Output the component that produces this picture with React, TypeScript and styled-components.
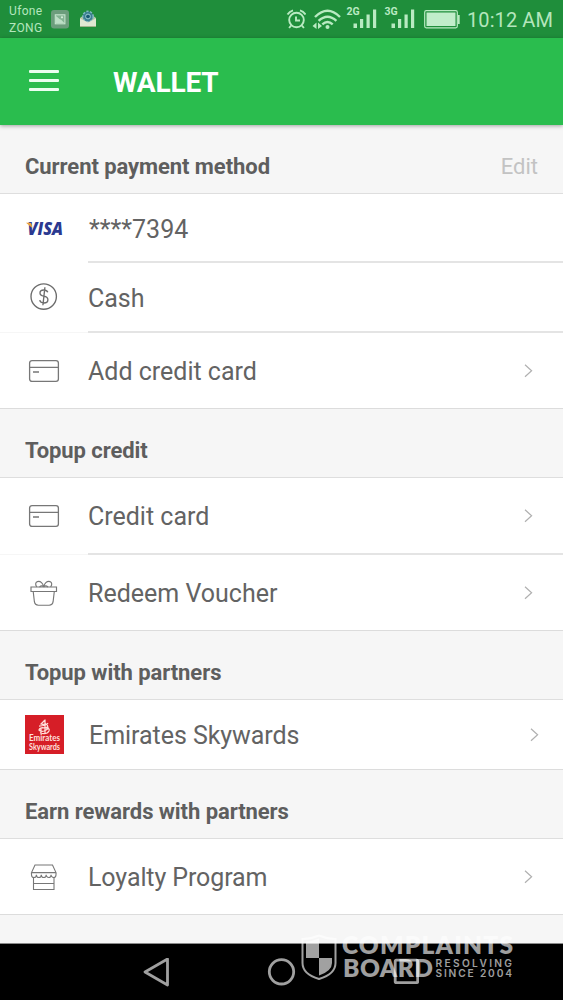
import React from 'react';
import styled, { createGlobalStyle } from 'styled-components';

const GlobalStyle = createGlobalStyle`
  * { box-sizing: border-box; }
  body { margin: 0; background: #fff; font-family: Roboto, "Liberation Sans", sans-serif; }
  svg { display: block; flex: none; }
`;

const Screen = styled.div`
  position: relative;
  width: 563px;
  height: 1000px;
  display: flex;
  flex-direction: column;
  overflow: hidden;
  background: #f6f6f6;
`;

const StatusBar = styled.div`
  flex: none;
  height: 38px;
  display: flex;
  align-items: center;
  padding: 0 9px 0 9px;
  background: #1f8e3b;
  color: #b4e6bd;
`;

const Carriers = styled.div`
  width: 42px;
  font-size: 12px;
  line-height: 17px;
  letter-spacing: 0.35px;
  padding-top: 1px;
`;

const StatusIcons = styled.div`
  margin-left: auto;
  display: flex;
  align-items: center;
`;

const AlarmSlot = styled.div`
  margin-right: 6px;
`;

const WifiSlot = styled.div`
  margin-right: 5px;
`;

const Signals = styled.div`
  display: flex;
  gap: 6px;
  margin: -2px 8px 0 0;
`;

const Clock = styled.div`
  width: 87px;
  margin-left: 7px;
  padding-top: 2px;
  font-size: 20px;
  line-height: 24px;
  letter-spacing: 0.1px;
  white-space: nowrap;
`;

const AppBar = styled.header`
  flex: none;
  position: relative;
  height: 87px;
  display: flex;
  align-items: center;
  padding: 0 29px;
  background: #2abd4e;
  box-shadow: 0 1px 4px rgba(0, 0, 0, 0.35);
`;

const MenuButton = styled.div`
  width: 30px;
  height: 21px;
  display: flex;
  flex-direction: column;
  justify-content: space-between;
  margin: -2px 54px 0 0;
`;

const MenuLine = styled.span`
  height: 3px;
  border-radius: 1px;
  background: #eafff0;
`;

const Title = styled.h1`
  margin: 2px 0 0;
  color: #fff;
  font-size: 28px;
  line-height: 34px;
  font-weight: 700;
  letter-spacing: -0.15px;
`;

const SectionHeader = styled.div<{ $height: number }>`
  flex: none;
  height: ${(p) => p.$height}px;
  display: flex;
  align-items: flex-end;
  justify-content: space-between;
  padding: 0 25px 12px;
  border-bottom: 1px solid #dedede;
  background: #f6f6f6;
  color: #5e5e5e;
  font-size: 22px;
  line-height: 28px;
  font-weight: 700;
`;

const SectionTitle = styled.span`
  letter-spacing: -0.07px;
`;

const EditButton = styled.span`
  color: #c3c3c3;
  font-weight: 400;
`;

const Row = styled.div<{ $height: number; $last?: boolean }>`
  flex: none;
  height: ${(p) => p.$height}px;
  display: flex;
  background: #fff;
  border-bottom: ${(p) => (p.$last ? '1px solid #dcdcdc' : 'none')};
`;

const IconCell = styled.div<{ $rule?: boolean }>`
  width: 88px;
  display: flex;
  align-items: center;
  padding-left: 25px;
  border-bottom: ${(p) => (p.$rule ? '1px solid #f6f6f6' : 'none')};
`;

const RowBody = styled.div<{ $divider?: boolean; $wide?: boolean }>`
  flex: 1;
  display: flex;
  align-items: center;
  justify-content: space-between;
  padding: 0 ${(p) => (p.$wide ? 24 : 30)}px 0 ${(p) => (p.$wide ? 1 : 0)}px;
  border-bottom: ${(p) => (p.$divider ? '2px solid #e4e4e4' : 'none')};
`;

const Label = styled.span<{ $drop?: number; $spacing?: number }>`
  color: #636363;
  font-size: 25px;
  line-height: 30px;
  white-space: nowrap;
  letter-spacing: ${(p) => p.$spacing ?? 0}px;
  padding-top: ${(p) => (p.$drop ?? 1) * 2}px;
`;

const NavBar = styled.nav`
  flex: none;
  height: 57px;
  margin-top: auto;
  display: flex;
  align-items: flex-start;
  padding: 14px 0 0 142px;
  gap: 97px;
  background: #000;
  border-top: 1px solid #8a8a8a;
`;

const Watermark = styled.svg`
  position: absolute;
  left: 298px;
  top: 932px;
`;

const Chevron = () => (
  <svg width="9" height="14" viewBox="0 0 9 14" fill="none" stroke="#b0b0b0" strokeWidth="1.200">
    <path d="M1 .8l6.600 6L1 12.800" />
  </svg>
);

const PictureIcon = () => (
  <svg width="18" height="19" viewBox="0 0 18 19">
    <rect width="18" height="18.500" rx="3" fill="#6c9d7c" />
    <rect x="4.300" y="4.800" width="9.600" height="9" fill="#83b392" stroke="#c5e5cd" strokeWidth="1.100" />
    <path d="M5 6l3.500 3 2 1 2.800 3H5z" fill="#bddfc6" />
    <circle cx="11" cy="7.300" r="1.100" fill="#d7f0dc" />
  </svg>
);

const MailSlot = styled.div`
  margin-left: 10px;
`;

const MailIcon = () => (
  <svg width="18" height="18" viewBox="0 0 18 18">
    <path d="M1 8l8-6 8 6v8.500H1z" fill="#b9c9a4" />
    <circle cx="9" cy="6.500" r="5.200" fill="#3b7f91" stroke="#82bac0" strokeWidth="1.500" strokeDasharray="2.200 1.500" />
    <circle cx="9" cy="6.500" r="2.400" fill="#185a72" stroke="#9dced2" />
    <path d="M1 8.500l8 4 8-4v8H1z" fill="#dfe8d2" />
    <path d="M1 16.500h16" stroke="#a1b58d" />
  </svg>
);

const AlarmIcon = () => (
  <svg width="20" height="21" viewBox="0 0 20 21" fill="none" stroke="#b9eac2" strokeWidth="1.900">
    <circle cx="10.500" cy="11" r="7.300" />
    <path d="M10 7.500V11.500h4M1.500 5.600Q3.500 2.300 7 1.300M19.500 5.600Q17.500 2.300 14 1.300M5.100 16.500l-2 2.500M15.900 16.500l2 2.500" />
  </svg>
);

const WifiIcon = () => (
  <svg width="29" height="21" viewBox="0 0 29 21" fill="none" stroke="#b9eac2" strokeWidth="2.400">
    <path d="M3 8Q15.500-4.500 28 8M6.600 11.800Q15.500 3.500 24.400 11.800M10.300 15.300Q15.500 10.500 20.700 15.300" />
    <circle cx="15.500" cy="18" r="2" fill="#b9eac2" stroke="none" />
    <path d="M4.500 13.500v6.500L.5 17zM6 13.500v6.500l4-3z" fill="#b9eac2" stroke="none" />
  </svg>
);

const SignalIcon = ({ label }: { label: string }) => (
  <svg width="32" height="25" viewBox="0 0 32 25" fill="#b9eac2">
    <text x="0.500" y="8.500" fontSize="10.500" fontWeight="700" fontFamily="Roboto, sans-serif">{label}</text>
    <rect x="7.500" y="17.500" width="3.500" height="4.500" />
    <rect x="14" y="13" width="3.200" height="9" />
    <rect x="20.500" y="8.500" width="3.200" height="13.500" />
    <rect x="27" y="3.500" width="3.200" height="18.500" />
  </svg>
);

const BatteryIcon = () => (
  <svg width="36" height="19" viewBox="0 0 36 19">
    <rect x="0.700" y="0.700" width="32.600" height="17.100" rx="1.500" fill="none" stroke="#b9eac2" strokeWidth="1.200" />
    <rect x="2.500" y="2.500" width="29" height="13.500" fill="#c1edca" />
    <path d="M34 5h1.700v9H34z" fill="#b9eac2" />
  </svg>
);

const VisaLogo = () => (
  <svg width="40" height="24" viewBox="0 0 40 24" fontFamily="Open Sans, sans-serif" fontWeight="800" fontStyle="italic">
    <text x="2.500" y="18" fontSize="17" fill="#2b3990" textLength="35.500" lengthAdjust="spacingAndGlyphs">VISA</text>
    <path d="M1 5.700h4q1.300 0 1.600 1.500l.7 3.800Q4.500 8.500 1 5.700z" fill="#e9a13a" />
  </svg>
);

const CashIcon = () => (
  <svg width="38" height="29" viewBox="0 0 38 29" fill="none" stroke="#6c6c6c" strokeWidth="1.350">
    <circle cx="18.700" cy="13.500" r="12.700" />
    <path d="M22.800 9.300Q21.800 7 18.800 7Q15 7 15 10Q15 12.500 18.800 13.200Q22.900 14 22.900 16.800Q22.900 20 18.900 20Q15.400 20 14.700 17.200M19.900 4.300L17.900 22.300" />
  </svg>
);

const CardIcon = () => (
  <svg width="38" height="24" viewBox="0 0 38 24" fill="none" stroke="#777" strokeWidth="1.300">
    <rect x="4.600" y="1.600" width="28.800" height="20.800" rx="2.400" />
    <path d="M4.600 8.300h28.800M8 13h6" />
  </svg>
);

const GiftIcon = () => (
  <svg width="38" height="28" viewBox="0 0 38 28" fill="none" stroke="#777" strokeWidth="1.150">
    <path d="M6 8h25.500v4.500H6zM8.200 12.500l1.200 10.200q.5 3.500 4 3.500h10.700q3.500 0 4-3.500l1.200-10.200" />
    <path d="M18.700 8C18.200 4.500 15.500 1.800 12.500 2.600Q9.200 4.200 11.800 8M18.700 8C19.200 4.500 21.900 1.800 24.900 2.600Q28.200 4.200 25.600 8M18.700 8Q17 5.800 14.500 8M18.700 8Q20.500 5.800 23 8" />
  </svg>
);

const StoreIcon = () => (
  <svg width="38" height="28" viewBox="0 0 38 28" fill="none" stroke="#777" strokeWidth="1.100">
    <path d="M10 2h17.500l3.500 7.600H6.500zM6.500 9.600v2.100a2.450 2.800 0 0 0 4.900 0a2.450 2.800 0 0 0 4.900 0a2.450 2.800 0 0 0 4.900 0a2.450 2.800 0 0 0 4.900 0a2.450 2.800 0 0 0 4.900 0V9.600" />
    <path d="M8.500 14.500v12h20.500v-12M8.500 20.500H29" />
  </svg>
);

const EmiratesLogo = () => (
  <svg width="39" height="39" viewBox="0 0 39 39">
    <rect width="39" height="39" fill="#d61e27" />
    <path d="M20 4.500v14.500M20 5l-4 4q3 1 5 0q4 3-1 4q-5-1-6 2q2 2 5 1q5-2 4-4M14 11q7 0 9-3M15 18q7 2 9-2q1-3-3-3M16 14v4" fill="none" stroke="#ffdeda" strokeWidth="1.250" />
    <g fill="#ffe1de" fontFamily="Lato, sans-serif" fontWeight="700" fontSize="8.500">
      <text x="4" y="26" textLength="31" lengthAdjust="spacingAndGlyphs">Emirates</text>
      <text x="4" y="34.500" textLength="31" lengthAdjust="spacingAndGlyphs">Skywards</text>
    </g>
  </svg>
);

const BackIcon = () => (
  <svg width="28" height="30" viewBox="0 0 28 30" fill="none" stroke="#a0a0a0" strokeWidth="2.800" strokeLinejoin="round">
    <path d="M25.500 1v26L3 14z" />
  </svg>
);

const HomeIcon = () => (
  <svg width="29" height="29" viewBox="0 0 29 29" fill="none" stroke="#a0a0a0" strokeWidth="2.800">
    <circle cx="14.500" cy="13.800" r="12.200" />
  </svg>
);

const RecentsIcon = () => (
  <svg width="26" height="28" viewBox="0 0 26 28" fill="none" stroke="#a0a0a0" strokeWidth="2.800">
    <rect x="2.200" y="2.200" width="22.500" height="22.500" rx="1" />
  </svg>
);

const BoardWatermark = () => (
  <Watermark width="220" height="52" viewBox="0 0 220 52" fill="#fff" fillOpacity=".63" fontFamily="Lato, sans-serif">
    <path d="M21 3.500Q29 7 37.500 7V31Q37.500 42 21 47Q4.500 42 4.500 31V7Q13 7 21 3.500z" fill="none" stroke="#fff" strokeOpacity=".63" strokeWidth="2" />
    <path d="M8 9.500Q15 9 21 6.500V26H8zM21 26h13v5q0 8-13 12.500z" />
    <text x="44" y="22.300" fontSize="24.500" fontWeight="800" textLength="171">COMPLAINTS</text>
    <text x="45" y="44.800" fontSize="24.500" fontWeight="800" textLength="90">BOARD</text>
    <g fontFamily="Inter, sans-serif" fontWeight="600" fontSize="10.200">
      <text x="137.500" y="35" textLength="76.500">RESOLVING</text>
      <text x="137.500" y="45.300" textLength="76.500">SINCE 2004</text>
    </g>
  </Watermark>
);

export default function App() {
  return (
    <>
      <GlobalStyle />
      <Screen>
        <StatusBar>
          <Carriers>
            <div>Ufone</div>
            <div>ZONG</div>
          </Carriers>
          <PictureIcon />
          <MailSlot><MailIcon /></MailSlot>
          <StatusIcons>
            <AlarmSlot><AlarmIcon /></AlarmSlot>
            <WifiSlot><WifiIcon /></WifiSlot>
            <Signals>
              <SignalIcon label="2G" />
              <SignalIcon label="3G" />
            </Signals>
            <BatteryIcon />
            <Clock>10:12 AM</Clock>
          </StatusIcons>
        </StatusBar>
        <AppBar>
          <MenuButton>
            <MenuLine />
            <MenuLine />
            <MenuLine />
          </MenuButton>
          <Title>WALLET</Title>
        </AppBar>

        <SectionHeader $height={69}>
          <SectionTitle>Current payment method</SectionTitle>
          <EditButton>Edit</EditButton>
        </SectionHeader>
        <Row $height={69}>
          <IconCell><VisaLogo /></IconCell>
          <RowBody $divider $wide><Label $drop={2}>****7394</Label></RowBody>
        </Row>
        <Row $height={70}>
          <IconCell $rule><CashIcon /></IconCell>
          <RowBody $divider><Label $drop={1.5}>Cash</Label></RowBody>
        </Row>
        <Row $height={76} $last>
          <IconCell><CardIcon /></IconCell>
          <RowBody><Label>Add credit card</Label><Chevron /></RowBody>
        </Row>

        <SectionHeader $height={69}>
          <SectionTitle>Topup credit</SectionTitle>
        </SectionHeader>
        <Row $height={77}>
          <IconCell $rule><CardIcon /></IconCell>
          <RowBody $divider><Label $drop={1.5}>Credit card</Label><Chevron /></RowBody>
        </Row>
        <Row $height={76} $last>
          <IconCell><GiftIcon /></IconCell>
          <RowBody><Label>Redeem Voucher</Label><Chevron /></RowBody>
        </Row>

        <SectionHeader $height={69}>
          <SectionTitle>Topup with partners</SectionTitle>
        </SectionHeader>
        <Row $height={70} $last>
          <IconCell><EmiratesLogo /></IconCell>
          <RowBody $wide><Label $spacing={-0.05}>Emirates Skywards</Label><Chevron /></RowBody>
        </Row>

        <SectionHeader $height={69}>
          <SectionTitle>Earn rewards with partners</SectionTitle>
        </SectionHeader>
        <Row $height={76} $last>
          <IconCell><StoreIcon /></IconCell>
          <RowBody><Label $spacing={-0.1}>Loyalty Program</Label><Chevron /></RowBody>
        </Row>

        <NavBar>
          <BackIcon />
          <HomeIcon />
          <RecentsIcon />
        </NavBar>
        <BoardWatermark />
      </Screen>
    </>
  );
}
